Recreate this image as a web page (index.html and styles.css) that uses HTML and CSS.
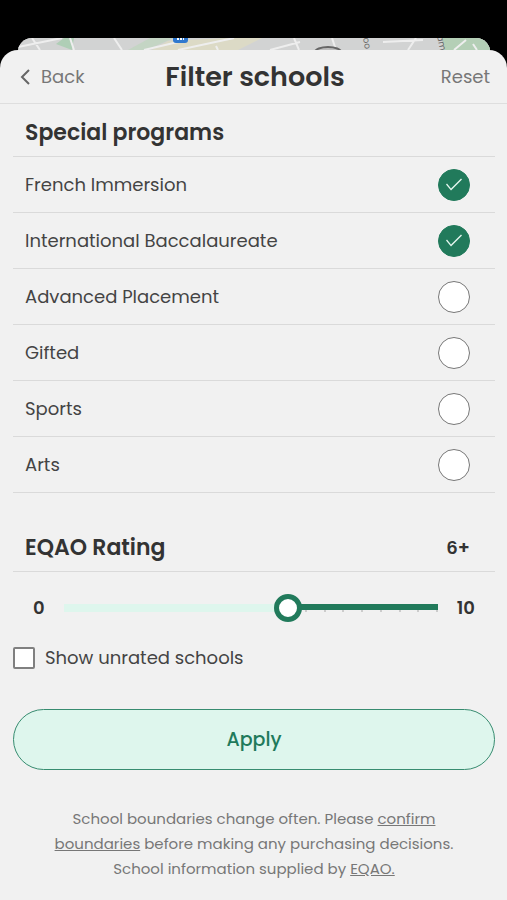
FILE: index.html
```
<!DOCTYPE html>
<html lang="en">

<head>
    <meta charset="UTF-8" />
    <meta name="viewport" content="width=device-width, initial-scale=1" />
    <title>Filter schools</title>
    <link rel="stylesheet" href="styles.css">
</head>

<body>
    <div class="map-peek">
        <svg class="map" viewBox="0 0 472 12" preserveAspectRatio="xMidYMin slice" aria-hidden="true">
            <rect width="472" height="12" fill="#d2d3d3" />
            <path d="M38 6l8-6h10l-2 12z" fill="#afceb6" />
            <path d="M110 12l22-12h24l-28 12z" fill="#c4d5c4" />
            <path d="M134 12l16-9 60-3h34l-24 12z" fill="#dcdac6" />
            <path d="M424 0h48v12h-46z" fill="#b4cfb6" />
            <path d="M0 9l44-9M14 0l8 12M52 0l4 12M96 0l8 12M126 12l34-8M160 12l56-12M198 8l2 4M252 12l30-8M276 0l5 12M314 0l4 12M365 4l40-2M398 0l-8 12M436 12l12-10M455 6l4 6" fill="none" stroke="#eeeeee" stroke-width="2" />
            <rect x="155" y="-8" width="15" height="13" rx="3" fill="#2f78cf" />
            <path d="M159 1h7" stroke="#ffffff" stroke-width="2" stroke-dasharray="2 1" />
            <ellipse cx="310" cy="14" rx="13" ry="5" fill="#bdbdbd" stroke="#666666" stroke-width="2" />
            <text transform="translate(345 0) rotate(80)" font-size="9" fill="#666666">oo</text>
            <text transform="translate(419 -2) rotate(78)" font-size="9" fill="#666666">am</text>
        </svg>
    </div>

    <form class="sheet">
        <header class="sheet-header">
            <button type="button" class="header-btn back-btn">
                <svg width="10" height="16" viewBox="0 0 10 16" aria-hidden="true">
                    <path d="M9 1L2 8l7 7" fill="none" stroke="currentColor" stroke-width="2" />
                </svg>
                Back
            </button>
            <h1>Filter schools</h1>
            <button type="reset" class="header-btn reset-btn">Reset</button>
        </header>

        <main class="content">
            <section>
                <div class="section-title">
                    <h2>Special programs</h2>
                </div>
                <ul class="programs">
                    <li><label for="french">French Immersion</label><input type="checkbox" id="french" checked /></li>
                    <li><label for="ib">International Baccalaureate</label><input type="checkbox" id="ib" checked /></li>
                    <li><label for="ap">Advanced Placement</label><input type="checkbox" id="ap" /></li>
                    <li><label for="gifted">Gifted</label><input type="checkbox" id="gifted" /></li>
                    <li><label for="sports">Sports</label><input type="checkbox" id="sports" /></li>
                    <li><label for="arts">Arts</label><input type="checkbox" id="arts" /></li>
                </ul>
            </section>

            <section class="rating">
                <div class="section-title">
                    <h2><label for="rating">EQAO Rating</label></h2>
                    <output id="ratingValue" for="rating">6+</output>
                </div>
                <div class="slider-row">
                    <span>0</span>
                    <input type="range" id="rating" min="0" max="10" step="0.5" value="6" style="--value: 0.6" />
                    <span>10</span>
                </div>
                <div class="unrated">
                    <input type="checkbox" id="unrated" />
                    <label for="unrated">Show unrated schools</label>
                </div>
            </section>

            <button type="submit" class="apply-btn">Apply</button>

            <p class="disclaimer">School boundaries change often. Please <a href="#">confirm boundaries</a> before making any purchasing decisions. School information supplied by <a href="#">EQAO.</a></p>
        </main>
    </form>

    <script>
        const form = document.querySelector(".sheet");
        const rating = document.getElementById("rating");
        const ratingValue = document.getElementById("ratingValue");

        function updateRating() {
            ratingValue.textContent = rating.value + "+";
            rating.style.setProperty("--value", rating.value / 10);
        }

        rating.addEventListener("input", updateRating);
        form.addEventListener("reset", () => setTimeout(updateRating));
        form.addEventListener("submit", e => e.preventDefault());
    </script>
</body>

</html>
```

FILE: styles.css
```
* {
    box-sizing: border-box;
}

body {
    margin: 0;
    padding-top: 38px;
    min-height: 100vh;
    display: flex;
    flex-direction: column;
    background: #000;
    color: #333;
    font-family: Poppins, Inter, sans-serif;
    font-size: 18px;
    line-height: 24px;
}

button,
input {
    font: inherit;
    margin: 0;
}

h1,
h2,
p,
ul {
    margin: 0;
    padding: 0;
}

/* map showing behind the sheet */
.map-peek {
    height: 32px;
    margin: 0 17px 0 18px;
    border-radius: 14px 14px 0 0;
    background: #d2d3d3;
    overflow: hidden;
}

.map {
    display: block;
    width: 100%;
}

.sheet {
    flex: 1;
    position: relative;
    margin-top: -20px;
    background: #f1f1f1;
    border-radius: 18px 18px 0 0;
}

.sheet-header {
    display: grid;
    grid-template-columns: 1fr auto 1fr;
    align-items: center;
    height: 54px;
    padding: 0 17px 0 20px;
    border-bottom: 1px solid #dedede;
}

.sheet-header h1 {
    font-size: 27px;
    line-height: 32px;
    font-weight: 600;
}

.header-btn {
    display: flex;
    align-items: center;
    padding: 0;
    border: none;
    background: none;
    color: #777;
    cursor: pointer;
}

.back-btn {
    gap: 11px;
}

.back-btn svg {
    color: #666;
}

.reset-btn {
    justify-self: end;
}

.content {
    padding: 0 12px 20px 13px;
}

.section-title {
    display: flex;
    align-items: center;
    justify-content: space-between;
    height: 53px;
    padding: 6px 25px 0 12px;
    border-bottom: 1px solid #dadada;
}

h2 {
    font-size: 22px;
    line-height: 28px;
    font-weight: 600;
}

.programs {
    list-style: none;
}

.programs li {
    display: flex;
    align-items: center;
    justify-content: space-between;
    height: 56px;
    padding: 0 25px 0 12px;
    border-bottom: 1px solid #dadada;
}

.programs label,
.unrated label {
    color: #444;
}

.programs label {
    flex: 1;
}

input[type="checkbox"] {
    appearance: none;
    flex: none;
    background: #fff;
    cursor: pointer;
}

.programs input {
    display: grid;
    place-items: center;
    width: 32px;
    height: 32px;
    border: 1px solid #777;
    border-radius: 50%;
}

.programs input:checked {
    background: #217a5b;
    border-color: #217a5b;
}

.programs input:checked::before {
    content: "";
    width: 18px;
    height: 14px;
    background: #e4f5ee;
    clip-path: polygon(1px 7px, 2px 6px, 6px 11px, 16px 1px, 17px 2px, 6px 13px);
}

.rating {
    padding-top: 26px;
}

output,
.slider-row {
    font-weight: 600;
}

.slider-row {
    display: flex;
    align-items: center;
    height: 72px;
    padding: 0 20px;
}

.slider-row input {
    appearance: none;
    flex: 1;
    min-width: 0;
    height: 28px;
    margin: 0 5px;
    background: none;
    cursor: pointer;
}

/* the bar is inset by half a thumb on both sides, the ticks hang below it */
.slider-row input::-webkit-slider-runnable-track {
    height: 28px;
    background:
        linear-gradient(#def6ed, #def6ed) 14px 10px / calc((100% - 28px) * var(--value)) 8px no-repeat,
        linear-gradient(#217a5b, #217a5b) 14px 10px / calc(100% - 28px) 6px no-repeat,
        repeating-linear-gradient(to left, #ccc 0 2px, transparent 2px 5%) 14px 16px / calc(100% - 28px) 2px no-repeat;
}

.slider-row input::-webkit-slider-thumb {
    appearance: none;
    width: 28px;
    height: 28px;
    border: 5px solid #217a5b;
    border-radius: 50%;
    background: #fff;
}

.unrated {
    display: flex;
    align-items: center;
    gap: 10px;
    height: 28px;
}

.unrated input {
    width: 22px;
    height: 22px;
    border: 2px solid #808080;
    border-radius: 2px;
}

.unrated input:checked {
    background: #217a5b;
}

.apply-btn {
    display: block;
    width: 100%;
    height: 61px;
    margin-top: 37px;
    border: 1px solid #378c70;
    border-radius: 31px;
    background: #def6ed;
    color: #217a5b;
    font-size: 19px;
    font-weight: 500;
    cursor: pointer;
}

.disclaimer {
    max-width: 420px;
    margin: 36px auto 0;
    color: #777;
    font-size: 15px;
    line-height: 25px;
    text-align: center;
}

.disclaimer a {
    color: inherit;
}
```
